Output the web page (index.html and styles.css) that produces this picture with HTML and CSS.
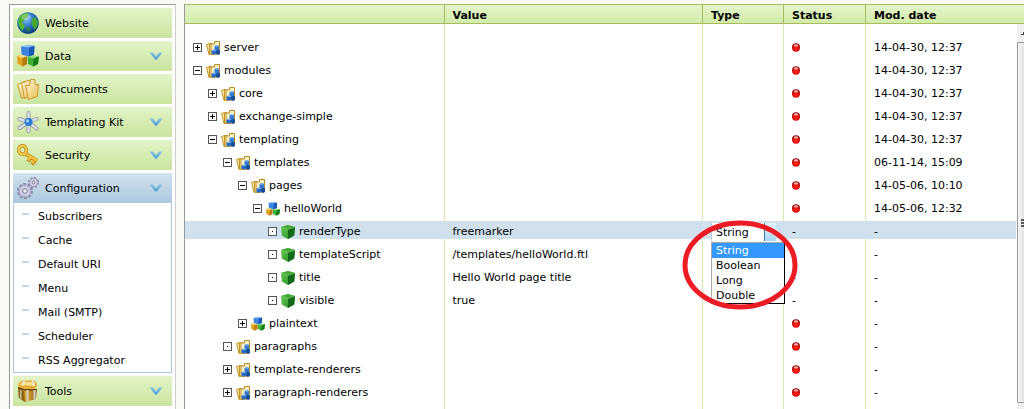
FILE: index.html
```html
<!DOCTYPE html>
<html lang="en">
  <head>
    <meta charset="UTF-8" />
    <meta name="viewport" content="width=device-width, initial-scale=1.0" />
    <title>Configuration</title>
    <link rel="stylesheet" href="styles.css">
  </head>
  <body>
    <!-- shared icons -->
    <svg class="defs" aria-hidden="true">
      <defs>
        <linearGradient id="gold" x1="0" y1="0" x2="1" y2="1">
          <stop offset="0" stop-color="#fff8d8" />
          <stop offset="1" stop-color="#e8bc50" />
        </linearGradient>
        <radialGradient id="ocean" cx="0.4" cy="0.3" r="0.7">
          <stop offset="0" stop-color="#8fc8f5" />
          <stop offset="0.5" stop-color="#2f7ac8" />
          <stop offset="1" stop-color="#0b3c7c" />
        </radialGradient>
        <radialGradient id="red" cx="0.5" cy="0.65" r="0.6">
          <stop offset="0" stop-color="#ff2a1c" />
          <stop offset="0.6" stop-color="#e00a08" />
          <stop offset="1" stop-color="#8c0c10" />
        </radialGradient>
        <linearGradient id="chest" x1="0" y1="0" x2="1" y2="0">
          <stop offset="0" stop-color="#8a5f10" />
          <stop offset="0.4" stop-color="#d9a52c" />
          <stop offset="1" stop-color="#9a6a14" />
        </linearGradient>
        <linearGradient id="shield" x1="0" y1="0" x2="1" y2="1">
          <stop offset="0" stop-color="#6cc95c" />
          <stop offset="1" stop-color="#1c8a1c" />
        </linearGradient>
      </defs>

      <symbol id="i-cubes" viewBox="0 0 22 22">
        <path d="M0 11l5-1 5 1.500v7.500l-4.500 2.500-5-3z" fill="#e2a41c" />
        <path d="M0 11l5-1 5 1.500-4.500 1.500z" fill="#fbe184" />
        <path d="M5.500 13l4.500-1.500v7.500l-4.500 2.500z" fill="#b67a0c" />
        <path d="M10.500 12l5-1.500 6.500 1-1 7.500-5 2.500-5-2.500z" fill="#3fb035" />
        <path d="M10.500 12l5-1.500 6.500 1-5.500 2z" fill="#93e080" />
        <path d="M16.500 13.500l5.500-2-1 7.500-5 2.500z" fill="#157d18" />
        <path d="M4 1.500l8-1.500 5.500 1-0.500 8.500-5.500 2-7-2z" fill="#3c84e0" />
        <path d="M4 1.500l8-1.500 5.500 1-6 1.500z" fill="#8cc0f8" />
        <path d="M12 2.500l5.500-1.500-0.500 8.500-5 2z" fill="#1d58b4" />
      </symbol>

      <symbol id="i-content" viewBox="0 0 14 14">
        <path d="M0.500 3.500l3-1 2 10-2.500 1z" fill="#fae7a2" stroke="#c29428" />
        <path d="M3.500 2.500h2.500l1 10-3.500 1z" fill="#fff1bd" stroke="#c29428" />
        <path d="M5 13.500v-10.500h3.500v-2.500h5v12.500z" fill="#fff3c4" stroke="#b98a20" />
        <path d="M8.500 5l2.500-1 2 1v3.500l-2 1-2.500-1z" fill="#2f78d4" />
        <path d="M5.500 9.500l2.500-1 2.200 1v3l-2.200 1.300-2.500-1.300z" fill="#2468c8" />
        <path d="M10 9.500l2-1 2 1v3.200l-2 1.200-2-1.200z" fill="#174f9f" />
        <path d="M8.500 5l2.500 1 2-1-2-1zM5.500 9.500l2.500 0.800 2.200-0.800-2.200-1z" fill="#7ab4f0" />
      </symbol>

      <symbol id="i-property" viewBox="0 0 14 14">
        <path d="M0 2l7-2 7 2-0.800 8.500-6.200 3.500-6.200-3.500z" fill="url(#shield)" />
        <path d="M0 2l7-2 7 2-7 2.200z" fill="#48a83c" />
        <path d="M7 4.200l7-2.200-0.800 8.500-6.200 3.500z" fill="#12691a" />
        <path d="M0.500 2.200l6.500 2.200 6.500-2.200" fill="none" stroke="#86d676" stroke-width="0.600" />
      </symbol>

      <symbol id="i-dot" viewBox="0 0 8 9">
        <ellipse cx="4" cy="4.500" rx="4" ry="4.200" fill="url(#red)" />
        <ellipse cx="4" cy="2.400" rx="2.200" ry="1.200" fill="#f0a8a0" />
      </symbol>

      <symbol id="i-chevron" viewBox="0 0 14 9">
        <path d="M0.500 0.500h3.500l3 3.500 3-3.500h3.500l-5.500 7.500h-2z" fill="#86c0dc" />
        <path d="M2.500 1.500l4.500 4 4.500-4-4.500 6z" fill="#4a9cca" />
      </symbol>
    </svg>

    <nav class="sidebar">
      <a class="item" href="#website">
        <svg class="icon" viewBox="0 0 22 22">
          <circle cx="11" cy="11" r="10.800" fill="url(#ocean)" />
          <path d="M2 6q3-5 8-5l2 1-2 2 1 1-3 2-1 2-2 1 1 2 2 1-1 3-2 3-3-5-1-4z" fill="#4fb52c" />
          <path d="M17 5l2 1 2 4-1 5-3 3-1-4-2-2 1-4z" fill="#47a830" />
          <path d="M9 16l3-1 1 2-2 3z" fill="#2f8628" />
          <ellipse cx="9" cy="5" rx="5" ry="3" fill="#fff" opacity="0.250" />
        </svg>
        Website
      </a>
      <a class="item" href="#data">
        <svg class="icon"><use href="#i-cubes" /></svg>
        Data
        <svg class="chevron"><use href="#i-chevron" /></svg>
      </a>
      <a class="item" href="#documents">
        <svg class="icon" viewBox="0 0 22 22">
          <path d="M0.500 6.500l5-2 1-1 3 0 3 14-8 3z" fill="url(#gold)" stroke="#c9982c" />
          <path d="M4.500 4.500l4-0.500 1-1.500 4 0 2 15-8 3z" fill="url(#gold)" stroke="#c9982c" />
          <path d="M8.500 7.500h4l1-6h4.500v5h3.500l-1 12-9 3z" fill="url(#gold)" stroke="#c9982c" />
        </svg>
        Documents
      </a>
      <a class="item" href="#templating">
        <svg class="icon" viewBox="0 0 22 22">
          <g stroke-linecap="round" fill="none">
            <path d="M11.500 2v18M2.500 8l9 3 8-3M2.500 17l9-6 8 6.500" stroke="#8f969e" stroke-width="4" />
            <path d="M11.500 2v18M2.500 8l9 3 8-3M2.500 17l9-6 8 6.500" stroke="#d9dde2" stroke-width="2.600" />
          </g>
          <circle cx="11.500" cy="11" r="4" fill="#2c7cd8" />
          <circle cx="10.500" cy="9.800" r="1.600" fill="#9fd4fa" />
        </svg>
        Templating Kit
        <svg class="chevron"><use href="#i-chevron" /></svg>
      </a>
      <a class="item" href="#security">
        <svg class="icon" viewBox="0 0 22 22">
          <g fill="none" stroke-linejoin="round">
            <ellipse cx="5.500" cy="6" rx="3.800" ry="4.300" stroke="#b9831a" stroke-width="3.600" />
            <path d="M8 9.500l12 7.500M17.500 16.500l-2.500 4M13.500 13.500l-2.500 4" stroke="#b9831a" stroke-width="4" />
            <ellipse cx="5.500" cy="6" rx="3.800" ry="4.300" stroke="#f7cf50" stroke-width="2.200" />
            <path d="M8 9.500l12 7M17 16.500l-2 3M13 13.500l-2 3" stroke="#f3c23a" stroke-width="2.600" />
          </g>
        </svg>
        Security
        <svg class="chevron"><use href="#i-chevron" /></svg>
      </a>
      <a class="item active" href="#configuration" aria-expanded="true">
        <svg class="icon" viewBox="0 0 22 22">
          <g fill="none" stroke="#8987aa">
            <circle cx="8" cy="14" r="6.800" stroke-width="2.400" stroke-dasharray="2.700 1.600" />
            <circle cx="16.500" cy="5.500" r="4.700" stroke-width="1.800" stroke-dasharray="2.100 1.600" />
          </g>
          <circle cx="8" cy="14" r="6" fill="#cdcce0" stroke="#a09ebc" />
          <circle cx="16.500" cy="5.500" r="4" fill="#d6d5e7" stroke="#a09ebc" />
          <circle cx="8" cy="14" r="2.300" fill="#eef3f9" stroke="#77759a" />
          <circle cx="16.500" cy="5.500" r="1.500" fill="#eef3f9" stroke="#77759a" />
        </svg>
        Configuration
        <svg class="chevron"><use href="#i-chevron" /></svg>
      </a>
      <ul class="submenu">
        <li><a href="#subscribers">Subscribers</a></li>
        <li><a href="#cache">Cache</a></li>
        <li><a href="#uri">Default URI</a></li>
        <li><a href="#menu">Menu</a></li>
        <li><a href="#mail">Mail (SMTP)</a></li>
        <li><a href="#scheduler">Scheduler</a></li>
        <li><a href="#rss">RSS Aggregator</a></li>
      </ul>
      <a class="item" href="#tools">
        <svg class="icon" viewBox="0 0 22 22">
          <path d="M1 5q1-4 5-4.500h10q4 0.500 4 5.500l-2 3h-15z" fill="#e2b23c" />
          <path d="M3 5q1-3 4-3h8q3 0 3 4z" fill="#f8e08c" />
          <path d="M1 7l6 2h13l-1 10-11 3-6-4z" fill="url(#chest)" />
          <path d="M1 7l6 2h13v1.500h-13l-6-2z" fill="#6c480a" />
          <path d="M1.500 9l5.500 2 1 11-6-4z" fill="#8d6414" />
          <path d="M9.500 10h2v11l-2 0.500zM16.500 10h2v9l-2 0.500z" fill="#cfd0d8" />
          <path d="M6 0.500h2l-1 5h-2zM15 0.500l2 0.500 1 5h-2z" fill="#e8e6dc" />
          <path d="M3 10l1.500 0.500v9l-1.500-1z" fill="#c0bda8" />
        </svg>
        Tools
        <svg class="chevron"><use href="#i-chevron" /></svg>
      </a>
      <a class="item" href="#more" aria-label="More"></a>
    </nav>

    <main class="tree">
      <table>
        <colgroup>
          <col />
          <col />
          <col class="col-type" />
          <col class="col-status" />
          <col class="col-date" />
        </colgroup>
        <thead>
          <tr>
            <th></th>
            <th>Value</th>
            <th>Type</th>
            <th>Status</th>
            <th>Mod. date</th>
          </tr>
        </thead>
        <tbody>
          <tr>
            <td><div class="node"><button class="toggle plus" aria-label="Expand"></button><svg><use href="#i-content" /></svg>server</div></td>
            <td></td><td></td>
            <td><svg class="dot"><use href="#i-dot" /></svg></td>
            <td>14-04-30, 12:37</td>
          </tr>
          <tr>
            <td><div class="node"><button class="toggle minus" aria-label="Collapse"></button><svg><use href="#i-content" /></svg>modules</div></td>
            <td></td><td></td>
            <td><svg class="dot"><use href="#i-dot" /></svg></td>
            <td>14-04-30, 12:37</td>
          </tr>
          <tr>
            <td><div class="node l1"><button class="toggle plus" aria-label="Expand"></button><svg><use href="#i-content" /></svg>core</div></td>
            <td></td><td></td>
            <td><svg class="dot"><use href="#i-dot" /></svg></td>
            <td>14-04-30, 12:37</td>
          </tr>
          <tr>
            <td><div class="node l1"><button class="toggle plus" aria-label="Expand"></button><svg><use href="#i-content" /></svg>exchange-simple</div></td>
            <td></td><td></td>
            <td><svg class="dot"><use href="#i-dot" /></svg></td>
            <td>14-04-30, 12:37</td>
          </tr>
          <tr>
            <td><div class="node l1"><button class="toggle minus" aria-label="Collapse"></button><svg><use href="#i-content" /></svg>templating</div></td>
            <td></td><td></td>
            <td><svg class="dot"><use href="#i-dot" /></svg></td>
            <td>14-04-30, 12:37</td>
          </tr>
          <tr>
            <td><div class="node l2"><button class="toggle minus" aria-label="Collapse"></button><svg><use href="#i-content" /></svg>templates</div></td>
            <td></td><td></td>
            <td><svg class="dot"><use href="#i-dot" /></svg></td>
            <td>06-11-14, 15:09</td>
          </tr>
          <tr>
            <td><div class="node l3"><button class="toggle minus" aria-label="Collapse"></button><svg><use href="#i-content" /></svg>pages</div></td>
            <td></td><td></td>
            <td><svg class="dot"><use href="#i-dot" /></svg></td>
            <td>14-05-06, 10:10</td>
          </tr>
          <tr>
            <td><div class="node l4"><button class="toggle minus" aria-label="Collapse"></button><svg><use href="#i-cubes" /></svg>helloWorld</div></td>
            <td></td><td></td>
            <td><svg class="dot"><use href="#i-dot" /></svg></td>
            <td>14-05-06, 12:32</td>
          </tr>
          <tr class="selected">
            <td><div class="node l5"><button class="toggle leaf" aria-label="Property"></button><svg><use href="#i-property" /></svg>renderType</div></td>
            <td>freemarker</td>
            <td class="editing">
              <select class="type" aria-label="Type">
                <option selected>String</option>
                <option>Boolean</option>
                <option>Long</option>
                <option>Double</option>
              </select>
              <ul class="options" role="listbox" aria-label="Type options">
                <li role="option" aria-selected="true">String</li>
                <li role="option">Boolean</li>
                <li role="option">Long</li>
                <li role="option">Double</li>
              </ul>
              <svg class="marker" viewBox="0 0 116 92">
                <ellipse cx="58" cy="46" rx="55" ry="42" fill="none" stroke="#ed1c24" stroke-width="5" />
              </svg>
            </td>
            <td>-</td>
            <td>-</td>
          </tr>
          <tr>
            <td><div class="node l5"><button class="toggle leaf" aria-label="Property"></button><svg><use href="#i-property" /></svg>templateScript</div></td>
            <td>/templates/helloWorld.ftl</td>
            <td></td><td>-</td><td>-</td>
          </tr>
          <tr>
            <td><div class="node l5"><button class="toggle leaf" aria-label="Property"></button><svg><use href="#i-property" /></svg>title</div></td>
            <td>Hello World page title</td>
            <td></td><td>-</td><td>-</td>
          </tr>
          <tr>
            <td><div class="node l5"><button class="toggle leaf" aria-label="Property"></button><svg><use href="#i-property" /></svg>visible</div></td>
            <td>true</td>
            <td></td><td>-</td><td>-</td>
          </tr>
          <tr>
            <td><div class="node l3"><button class="toggle plus" aria-label="Expand"></button><svg><use href="#i-cubes" /></svg>plaintext</div></td>
            <td></td><td></td>
            <td><svg class="dot"><use href="#i-dot" /></svg></td>
            <td>-</td>
          </tr>
          <tr>
            <td><div class="node l2"><button class="toggle leaf" aria-label="Empty"></button><svg><use href="#i-content" /></svg>paragraphs</div></td>
            <td></td><td></td>
            <td><svg class="dot"><use href="#i-dot" /></svg></td>
            <td>-</td>
          </tr>
          <tr>
            <td><div class="node l2"><button class="toggle plus" aria-label="Expand"></button><svg><use href="#i-content" /></svg>template-renderers</div></td>
            <td></td><td></td>
            <td><svg class="dot"><use href="#i-dot" /></svg></td>
            <td>-</td>
          </tr>
          <tr>
            <td><div class="node l2"><button class="toggle plus" aria-label="Expand"></button><svg><use href="#i-content" /></svg>paragraph-renderers</div></td>
            <td></td><td></td>
            <td><svg class="dot"><use href="#i-dot" /></svg></td>
            <td>-</td>
          </tr>
          <tr>
            <td><div class="node l2"><button class="toggle leaf" aria-label="Empty"></button><svg><use href="#i-cubes" /></svg></div></td>
            <td></td><td></td><td></td><td></td>
          </tr>
        </tbody>
      </table>
      <div class="scrollbar">
        <div class="arrow"></div>
        <div class="thumb"></div>
      </div>
    </main>
  </body>
</html>
```

FILE: styles.css
```css
* {
  box-sizing: border-box;
}

body {
  display: flex;
  gap: 8px;
  height: 100vh;
  margin: 0;
  padding: 4px 0 0 9px;
  overflow: hidden;
  background: #f9faf4;
  color: #000;
  font-family: Verdana, "DejaVu Sans", sans-serif;
  font-size: 11px;
  line-height: 15px;
}

ul {
  list-style: none;
  margin: 0;
  padding: 0;
}

a {
  color: inherit;
  text-decoration: none;
}

.defs {
  position: absolute;
  width: 0;
  height: 0;
}

/* sidebar */
.sidebar {
  display: flex;
  flex-direction: column;
  flex: none;
  gap: 3px;
  width: 167px;
  padding: 3px;
  background: #fff;
  border: 1px solid #999;
  border-right-color: #ccc;
  border-bottom: none;
  overflow: hidden;
}

.item {
  display: flex;
  flex: none;
  align-items: center;
  gap: 6px;
  height: 30px;
  padding: 0 9px 0 4px;
  background: linear-gradient(#e3f3c8, #c9e59f);
}

.item.active {
  background: linear-gradient(#d3e2ee, #abc8df);
}

.icon {
  width: 22px;
  height: 22px;
}

.chevron {
  width: 14px;
  height: 9px;
  margin-left: auto;
}

.submenu {
  flex: none;
  margin-top: -3px;
  padding-bottom: 1px;
  border: 1px solid #abc8df;
  border-top: none;
}

.submenu a {
  display: flex;
  align-items: center;
  gap: 9px;
  height: 24px;
  padding: 2px 0 0 8px;
}

.submenu a::before {
  content: "";
  width: 7px;
  height: 2px;
  margin-bottom: 4px;
  background: #bfdaea;
}

/* tree table */
.tree {
  position: relative;
  flex: 1;
  min-width: 0;
  background: #fff;
  border-left: 1px solid #999;
  overflow: hidden;
}

table {
  width: 100%;
  table-layout: fixed;
  border-collapse: separate;
  border-spacing: 0;
}

.col-type {
  width: 81px;
}

.col-status {
  width: 82px;
}

.col-date {
  width: 159px;
}

th {
  height: 20px;
  padding: 2px 0 0 8px;
  text-align: left;
  background: linear-gradient(#e5f4cb, #d2eba9);
  border: solid #a9bb5c;
  border-width: 1px 0 1px 1px;
}

th:first-child {
  border-left: none;
}

td {
  height: 23px;
  padding: 2px 0 0 9px;
  white-space: nowrap;
  background: linear-gradient(#d3ebac, #d3ebac) 0 0 / 1px 100% no-repeat;
}

td:first-child {
  padding-left: 8px;
  background: none;
}

tbody tr:first-child td {
  height: 34px;
  padding-top: 13px;
}

/* the highlight covers the column lines */
.selected td {
  background:
    linear-gradient(#d1e0ed, #d1e0ed) 0 2px / 100% 18px no-repeat,
    linear-gradient(#d3ebac, #d3ebac) 0 0 / 1px 100% no-repeat;
}

.selected td:first-child {
  background: linear-gradient(#d1e0ed, #d1e0ed) 0 2px / 100% 18px no-repeat;
}

.node {
  display: flex;
  align-items: center;
  gap: 4px;
}

.node svg {
  width: 14px;
  height: 14px;
}

.l1 { padding-left: 15px; }
.l2 { padding-left: 30px; }
.l3 { padding-left: 45px; }
.l4 { padding-left: 60px; }
.l5 { padding-left: 75px; }

.toggle {
  width: 9px;
  height: 9px;
  padding: 0;
  border: 1px solid #555;
  background: #fff no-repeat center;
}

.plus {
  background-image: linear-gradient(#000, #000), linear-gradient(#000, #000);
  background-size: 5px 1px, 1px 5px;
}

.minus {
  background-image: linear-gradient(#000, #000);
  background-size: 5px 1px;
}

.leaf {
  background-image: linear-gradient(#000, #000);
  background-size: 1px 1px;
}

.dot {
  display: block;
  width: 8px;
  height: 9px;
}

/* type editor */
.editing {
  position: relative;
}

.type {
  position: absolute;
  top: 4px;
  left: 9px;
  width: 65px;
  height: 18px;
  padding: 1px 0 0 4px;
  appearance: none;
  border: 1px solid #b5cfe7;
  border-width: 0 0 0 1px;
  border-radius: 0;
  font: inherit;
  color: #000;
  background:
    linear-gradient(45deg, transparent 50%, #000 50%) right 2px top 7px / 4px 4px no-repeat,
    linear-gradient(#3c7fb1, #3c7fb1) right 11px top 0 / 1px 100% no-repeat,
    linear-gradient(#e3f4fc, #a8d9f2) right 0 top 0 / 12px 100% no-repeat,
    #fff;
}

.options {
  position: absolute;
  z-index: 1;
  top: 23px;
  left: 9px;
  width: 74px;
  background: #fff;
  border: 1px solid #000;
  border-top-color: #aaa;
  border-left-color: #aaa;
}

.options li {
  padding-left: 4px;
}

.options li[aria-selected="true"] {
  background: #39f;
  color: #fff;
}

.marker {
  position: absolute;
  z-index: 2;
  top: 0;
  left: -20px;
  width: 116px;
  height: 92px;
  pointer-events: none;
}

/* scrollbar, cut by the window edge */
.scrollbar {
  position: absolute;
  top: 20px;
  right: 0;
  bottom: 0;
  display: flex;
  flex-direction: column;
  width: 8px;
  padding-bottom: 6px;
  overflow: hidden;
  background: #f0f0f0;
  border-left: 1px solid #fff;
}

.arrow {
  height: 18px;
  background: linear-gradient(135deg, transparent 50%, #444 50%) right 0 top 8px / 3px 3px no-repeat;
}

.thumb {
  flex: 1;
  border: 1px solid #999;
  border-right: none;
  border-radius: 2px 0 0 2px;
  background:
    repeating-linear-gradient(#555 0 2px, transparent 2px 3px) right center / 3px 8px no-repeat,
    linear-gradient(90deg, #f7f7f7, #e4e4e4);
}
```
